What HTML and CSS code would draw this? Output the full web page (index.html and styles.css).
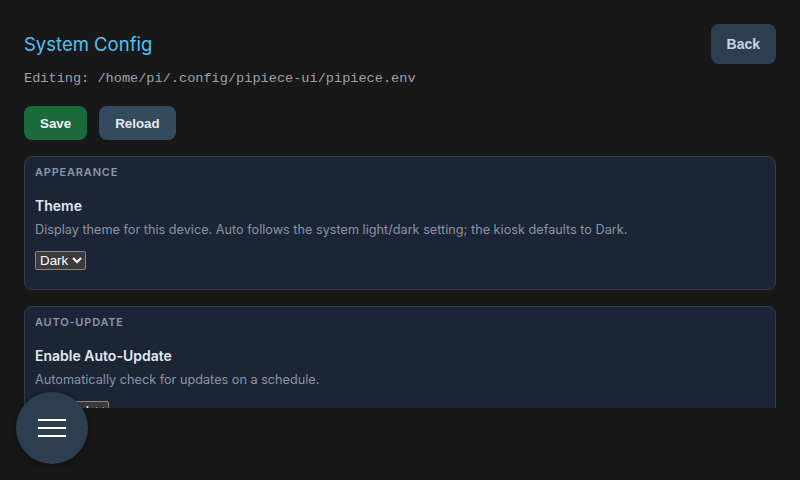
FILE: index.html
```html
<!DOCTYPE html>
<html lang="en">
<head>
<meta charset="utf-8">
<title>System Config</title>
<link rel="stylesheet" href="styles.css">
</head>
<body>
<div class="app">
  <main class="content">
    <header class="header">
      <h1 class="title">System Config</h1>
      <button class="btn btn-back">Back</button>
    </header>
    <p class="path">Editing: /home/pi/.config/pipiece-ui/pipiece.env</p>
    <div class="actions">
      <button class="btn btn-save">Save</button>
      <button class="btn btn-reload">Reload</button>
    </div>
    <section class="card">
      <h2 class="card-title">APPEARANCE</h2>
      <div class="field">
        <div class="field-label">Theme</div>
        <div class="field-desc">Display theme for this device. Auto follows the system light/dark setting; the kiosk defaults to Dark.</div>
        <select class="field-select"><option>Dark</option><option>Light</option><option>Auto</option></select>
      </div>
    </section>
    <section class="card">
      <h2 class="card-title">AUTO-UPDATE</h2>
      <div class="field">
        <div class="field-label">Enable Auto-Update</div>
        <div class="field-desc">Automatically check for updates on a schedule.</div>
        <select class="field-select"><option>Enabled</option><option>Disabled</option></select>
      </div>
    </section>
  </main>
  <nav class="bottom"></nav>
  <button class="fab" aria-label="Menu">
    <svg width="28" height="18" viewBox="0 0 28 18"><rect x="0" y="0" width="28" height="2" fill="#fff"/><rect x="0" y="8" width="28" height="2" fill="#fff"/><rect x="0" y="16" width="28" height="2" fill="#fff"/></svg>
  </button>
</div>
</body>
</html>
```
FILE: styles.css
```css
html { color-scheme: dark; }
* { box-sizing: border-box; }
body {
  margin: 0;
  background: #181818;
  font-family: Inter, "Noto Sans", sans-serif;
  color: #e2e8f0;
}
.app {
  position: relative;
  width: 800px;
  height: 480px;
  display: flex;
  flex-direction: column;
  overflow: hidden;
}
.content {
  height: 408px;
  overflow: hidden;
  padding: 24px 24px 0;
}
.bottom { height: 72px; }
.header {
  display: flex;
  justify-content: space-between;
  align-items: center;
  height: 40px;
}
.title {
  margin: 0;
  font-size: 18.5px;
  font-weight: 400;
  color: #4fc3f7;
}
.btn {
  font-family: "Liberation Sans", Arial, sans-serif;
  font-weight: 700;
  font-size: 13.33px;
  border: none;
  border-radius: 8px;
  padding: 0 16px;
  height: 34px;
  color: #f1f5f9;
}
.btn-back {
  height: 40px;
  font-size: 14px;
  background: #2c3e50;
  color: #cbd5e1;
}
.btn-save { background: #1b6b3a; }
.btn-reload { background: #344a5f; color: #e2e8f0; }
.path {
  margin: 7px 0 0;
  font-family: "Liberation Mono", monospace;
  font-size: 13.6px;
  line-height: 16px;
  color: #9ca3af;
}
.actions {
  display: flex;
  gap: 12px;
  margin-top: 19px;
}
.card {
  margin-top: 16px;
  background: #1b2535;
  border: 1px solid #2f3d50;
  border-radius: 8px;
  padding: 8px 10px 19px;
}
.card-title {
  margin: 0;
  font-size: 11px;
  line-height: 14px;
  font-weight: 600;
  letter-spacing: 0.8px;
  color: #8b96a5;
}
.field { margin-top: 17px; }
.field-label {
  font-size: 14px;
  line-height: 20px;
  font-weight: 600;
  color: #e2e8f0;
}
.field-desc {
  margin-top: 5px;
  font-size: 12.7px;
  line-height: 18px;
  color: #8a94a3;
}
.field-select {
  display: block;
  margin-top: 12px;
}
.fab {
  position: absolute;
  left: 16px;
  top: 392px;
  width: 72px;
  height: 72px;
  border-radius: 50%;
  border: none;
  background: #2c3e50;
  box-shadow: 0 2px 8px rgba(0,0,0,0.4);
  display: flex;
  align-items: center;
  justify-content: center;
  padding: 0;
}
.fab svg { display: block; }
```
